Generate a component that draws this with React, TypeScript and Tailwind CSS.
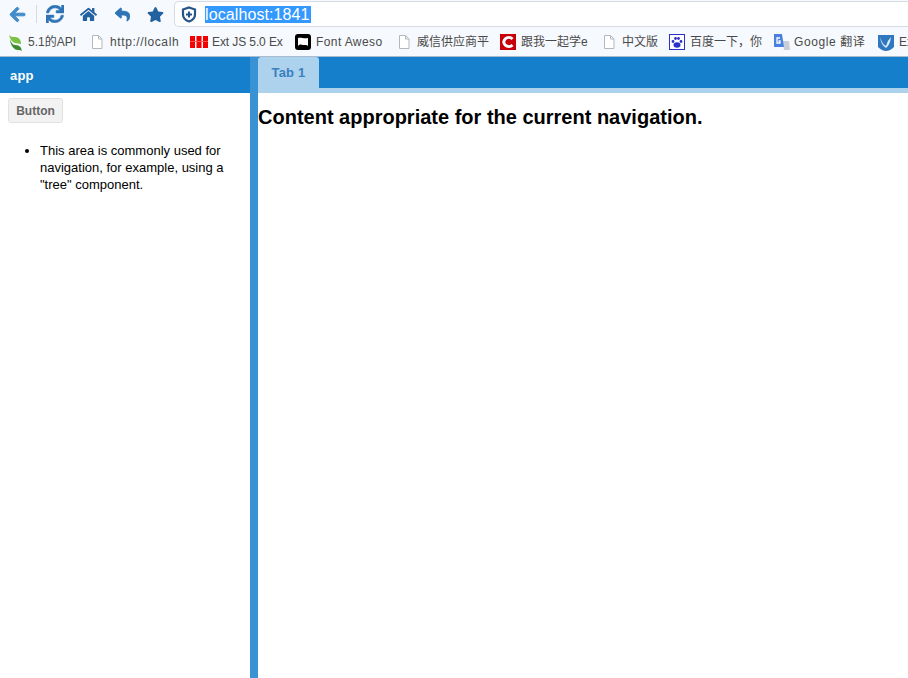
import { FaArrowLeft, FaHome, FaReply, FaStar, FaSync } from "react-icons/fa";

const cjk = "font-['Liberation_Sans','Noto_Sans_CJK_SC',sans-serif]";

function PageIcon() {
  return (
    <svg width="12" height="14" viewBox="0 0 12 14" className="shrink-0">
      <path d="M1.5 .5h6l3.500 3.500v9.500h-9.500z M7.500 .5v3.500h3.500" fill="#fff" stroke="#b4b8bc" />
    </svg>
  );
}

function Bookmark({ icon, label, width, track }: { icon: React.ReactNode; label: string; width: string; track: string }) {
  return (
    <div className={`flex items-center gap-[5px] shrink-0 ${width}`}>
      <div className="w-[16px] h-[16px] flex items-center justify-center shrink-0">{icon}</div>
      <span className={`text-[12px] text-[#4a4a4a] whitespace-nowrap ${track}`}>{label}</span>
    </div>
  );
}

export default function App() {
  return (
    <div className={`w-[908px] h-[678px] overflow-hidden bg-white flex flex-col ${cjk}`}>
      {/* browser toolbar */}
      <div className="h-[28px] bg-[#f6f9fd] flex items-center pl-[9px]">
        <FaArrowLeft className="text-[#3f8ccb] w-[17px] h-[17px]" stroke="currentColor" strokeWidth={30} />
        <div className="w-px h-[18px] bg-[#d5dbe2] ml-[10px] mr-[9px]" />
        <FaSync className="text-[#2f74b5] w-[18px] h-[18px]" stroke="currentColor" strokeWidth={16} />
        <FaHome className="text-[#22629f] w-[17px] h-[17px] ml-[16px]" />
        <FaReply className="text-[#2f74b5] w-[15px] h-[15px] ml-[18px]" stroke="currentColor" strokeWidth={20} />
        <FaStar className="text-[#22629f] w-[17px] h-[17px] ml-[17px]" />
        <div className="ml-[10px] flex-1 h-[26px] bg-white border border-[#d4dbe3] border-r-0 rounded-l-[5px] flex items-center pl-[6px]">
          <svg width="16" height="17" viewBox="0 0 16 17" className="shrink-0">
            <path d="M8 1.500l6 2v5c0 3.500-3 6-6 7-3-1-6-3.500-6-7v-5z" fill="#fff" stroke="#24558a" strokeWidth="2.200" />
            <path d="M8 5.500v6M5 8.500h6" stroke="#24558a" strokeWidth="2" />
          </svg>
          <span className="ml-[8px] bg-[#3399ff] text-white text-[16px] leading-[17px] w-[106px] whitespace-nowrap tracking-[0.1px]">
            localhost:1841
          </span>
        </div>
      </div>

      {/* bookmarks bar */}
      <div className="h-[29px] bg-[#f6f9fd] border-b border-[#a9bccd] flex items-center pl-[7px] overflow-hidden">
        <Bookmark
          width="w-[82px]"
          track="tracking-[0px]"
          label="5.1的API"
          icon={
            <svg width="15" height="17" viewBox="0 0 15 17">
              <path d="M1 1c1 4 3 7 6 8 2 .5 4 .5 6 1 0-4-2-7-6-7-2 0-4 0-6-2z" fill="#7cc242" />
              <path d="M2 5c1 4 3 6 5 6 3 0 5 1 6 3l1 3c-1-1-2-1-4-1-4 0-8-5-8-11z" fill="#3d8a2c" />
            </svg>
          }
        />
        <Bookmark width="w-[102px]" track="tracking-[0.6px]" label="http://localh" icon={<PageIcon />} />
        <Bookmark
          width="w-[104px]"
          track="tracking-[-0.1px]"
          label="Ext JS 5.0 Ex"
          icon={
            <svg width="18" height="12" viewBox="0 0 18 12" className="shrink-0 -ml-[1px]">
              <path d="M0 0h5v12h-5zM6.500 0h5v12h-5zM13 0h5v12h-5z" fill="#f40000" />
              <path d="M0 5h18v1h-18z" fill="#ff5050" />
            </svg>
          }
        />
        <Bookmark
          width="w-[101px]"
          track="tracking-[0.4px]"
          label="Font Aweso"
          icon={
            <svg width="16" height="16" viewBox="0 0 16 16">
              <rect width="16" height="16" rx="3" fill="#000" />
              <path d="M3 4c3-1 6 1 10 0v8c-2-2-3-.5-5-1s-3-1-5 1z" fill="#fff" />
            </svg>
          }
        />
        <Bookmark width="w-[104px]" track="tracking-[0px]" label="威信供应商平" icon={<PageIcon />} />
        <Bookmark
          width="w-[101px]"
          track="tracking-[0px]"
          label="跟我一起学e"
          icon={
            <svg width="16" height="16" viewBox="0 0 16 16">
              <rect width="16" height="16" fill="#c8000a" />
              <path d="M12.500 5a5 4.500 0 1 0 0 6" fill="none" stroke="#fff" strokeWidth="3" />
            </svg>
          }
        />
        <Bookmark width="w-[68px]" track="tracking-[0px]" label="中文版" icon={<PageIcon />} />
        <Bookmark
          width="w-[104px]"
          track="tracking-[0px]"
          label="百度一下，你"
          icon={
            <svg width="16" height="16" viewBox="0 0 16 16">
              <rect x=".5" y=".5" width="15" height="15" fill="#fff" stroke="#2a32c8" />
              <ellipse cx="8" cy="11" rx="3.500" ry="2.800" fill="#2a32c8" />
              <circle cx="4" cy="7.500" r="1.400" fill="#2a32c8" />
              <circle cx="6.500" cy="4.500" r="1.400" fill="#2a32c8" />
              <circle cx="9.500" cy="4.500" r="1.400" fill="#2a32c8" />
              <circle cx="12" cy="7.500" r="1.400" fill="#2a32c8" />
            </svg>
          }
        />
        <Bookmark
          width="w-[105px]"
          track="tracking-[0.6px]"
          label="Google 翻译"
          icon={
            <svg width="17" height="16" viewBox="0 0 17 16" className="shrink-0">
              <path d="M10 7h6l1 9h-6z" fill="#c9ced6" />
              <path d="M1 0h8l2 13h-10z" fill="#4a80e0" />
              <path d="M7 4h-3v5h3v-2h-1.500" fill="none" stroke="#fff" strokeWidth="1.300" />
            </svg>
          }
        />
        <Bookmark
          width="w-[40px]"
          track="tracking-[0px]"
          label="Ex"
          icon={
            <svg width="16" height="17" viewBox="0 0 16 17">
              <path d="M0 1h16v12q-4 4-8 4t-8-4z" fill="#2f78c0" />
              <path d="M2 3q2 7 6 9 1-5 5-9-1 8-5 11-5-3-6-11z" fill="#dcecf8" />
            </svg>
          }
        />
      </div>

      {/* app */}
      <div className="flex-1 flex min-h-0 font-['Liberation_Sans',sans-serif]">
        <aside className="w-[250px] shrink-0 flex flex-col">
          <div className="h-[36px] bg-[#157fcc] flex items-center pl-[10px] pt-[2px] text-white font-bold text-[13px] tracking-[0.2px]">
            app
          </div>
          <div className="pt-[5px] px-[8px]">
            <button className="block h-[25px] w-[55px] rounded-[3px] border border-[#e1e1e1] bg-[#f2f2f2] text-[#666] font-bold text-[12px]">
              Button
            </button>
            <ul className="list-disc mt-[19px] ml-[32px] mr-[10px] text-[13px] leading-[17px] text-black">
              <li>This area is commonly used for navigation, for example, using a "tree" component.</li>
            </ul>
          </div>
        </aside>
        <div className="w-[8px] shrink-0 bg-[#3892d4]" />
        <main className="flex-1 flex flex-col min-w-0">
          <div className="h-[31px] bg-[#157fcc] flex">
            <div className="w-[61px] bg-[#add2ed] rounded-t-[3px] flex items-center justify-center text-[#3a80c0] font-bold text-[13px] tracking-[0.2px]">
              Tab 1
            </div>
          </div>
          <div className="h-[5px] bg-[#add2ed]" />
          <h1 className="text-[20px] font-bold text-black leading-[23px] mt-[13px]">
            Content appropriate for the current navigation.
          </h1>
        </main>
      </div>
    </div>
  );
}
